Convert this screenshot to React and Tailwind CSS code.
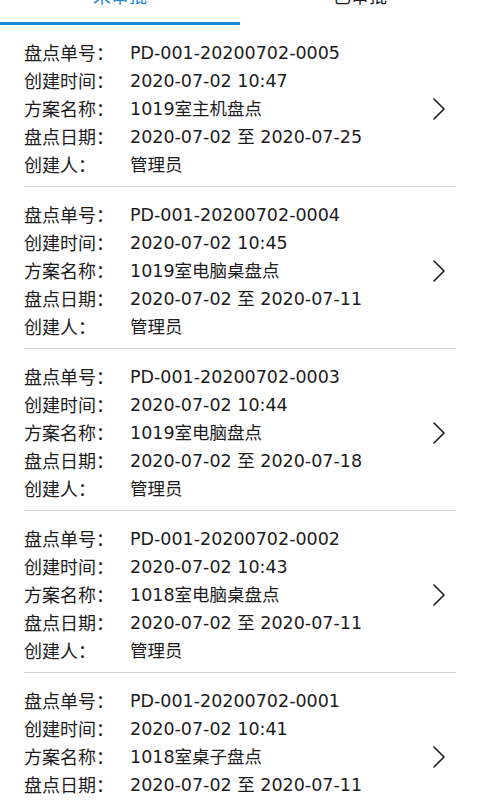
const records = [
  { no: "PD-001-20200702-0005", created: "2020-07-02 10:47", name: "1019室主机盘点", range: "2020-07-02 至 2020-07-25", owner: "管理员" },
  { no: "PD-001-20200702-0004", created: "2020-07-02 10:45", name: "1019室电脑桌盘点", range: "2020-07-02 至 2020-07-11", owner: "管理员" },
  { no: "PD-001-20200702-0003", created: "2020-07-02 10:44", name: "1019室电脑盘点", range: "2020-07-02 至 2020-07-18", owner: "管理员" },
  { no: "PD-001-20200702-0002", created: "2020-07-02 10:43", name: "1018室电脑桌盘点", range: "2020-07-02 至 2020-07-11", owner: "管理员" },
  { no: "PD-001-20200702-0001", created: "2020-07-02 10:41", name: "1018室桌子盘点", range: "2020-07-02 至 2020-07-11", owner: "管理员" },
];

function Row({ label, value }) {
  return (
    <div className="flex h-[28px] items-center">
      <span className="w-[106px] shrink-0 text-[18px]">{label}</span>
      <span className="text-[17.5px]">{value}</span>
    </div>
  );
}

function Chevron() {
  return (
    <svg width="12" height="22" viewBox="0 0 12 22" fill="none" className="mr-[11px] shrink-0">
      <polyline points="1,1 11,11 1,21" stroke="#1c1c1c" strokeWidth="1.6" strokeLinecap="round" strokeLinejoin="round" />
    </svg>
  );
}

export default function App() {
  return (
    <div
      className="h-[800px] overflow-hidden bg-white text-[#1c1c1c]"
      style={{ fontFamily: '"DejaVu Sans", "Noto Sans CJK SC", sans-serif' }}
    >
      {/* Tabs, scrolled partly out of view */}
      <div className="-mt-[19px] flex h-[44px] text-[18px]">
        <div className="flex-1 border-b-[3px] border-[#1e8ad6] pt-[4px] text-center leading-[24px] text-[#1e8ad6]">
          未审批
        </div>
        <div className="flex-1 pt-[4px] text-center leading-[24px]">已审批</div>
      </div>

      <ul>
        {records.map((r) => (
          <li key={r.no} className="mx-6 flex items-center border-b border-[#d4d4d4] pb-[7px] pt-[14px]">
            <div className="flex-1">
              <Row label="盘点单号：" value={r.no} />
              <Row label="创建时间：" value={r.created} />
              <Row label="方案名称：" value={r.name} />
              <Row label="盘点日期：" value={r.range} />
              <Row label="创建人：" value={r.owner} />
            </div>
            <Chevron />
          </li>
        ))}
      </ul>
    </div>
  );
}
